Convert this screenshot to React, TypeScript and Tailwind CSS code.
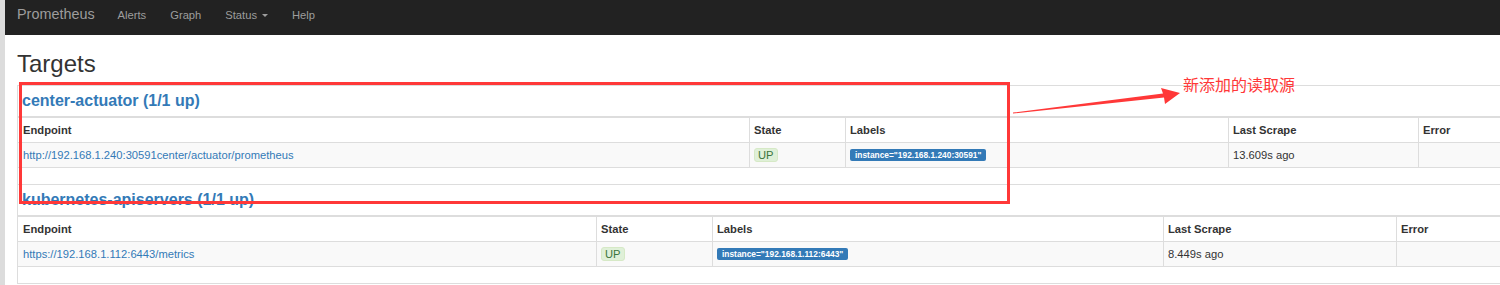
import React from "react";

type Job = {
  name: string;
  endpoint: string;
  instance: string;
  scrape: string;
  cols: string[];
};

// Column widths are measured from the screenshot (each job table sizes its own columns)
const jobs: Job[] = [
  {
    name: "center-actuator",
    endpoint: "http://192.168.1.240:30591center/actuator/prometheus",
    instance: "192.168.1.240:30591",
    scrape: "13.609s ago",
    cols: ["w-[731px]", "w-[96px]", "w-[383px]", "w-[190px]"],
  },
  {
    name: "kubernetes-apiservers",
    endpoint: "https://192.168.1.112:6443/metrics",
    instance: "192.168.1.112:6443",
    scrape: "8.449s ago",
    cols: ["w-[578px]", "w-[116px]", "w-[451px]", "w-[233px]"],
  },
];

function NavBar() {
  return (
    <div className="flex h-[35px] items-start bg-[#222] pl-[12px] text-[#9d9d9d]">
      <span className="pt-[6px] text-[14.4px] leading-[17px]">Prometheus</span>
      <nav className="ml-[23px] flex gap-[24px] pt-[8px] text-[11.2px] leading-[14px]">
        <span>Alerts</span>
        <span>Graph</span>
        <span className="flex items-center">
          Status
          <span className="ml-[5px] inline-block h-0 w-0 border-x-[3px] border-t-[3px] border-x-transparent border-t-[#9d9d9d]" />
        </span>
        <span>Help</span>
      </nav>
    </div>
  );
}

function JobTable({ job }: { job: Job }) {
  const [c1, c2, c3, c4] = job.cols;
  const cell = "flex h-full items-center pl-[4px]";
  return (
    <div className="border-t border-[#ddd]">
      {/* Job heading */}
      <div className="flex h-[32px] items-center border-b-2 border-[#ddd] pl-[4px]">
        <span className="text-[16px] font-bold leading-[18px] text-[#337ab7]">
          {job.name} (1/1 up)
        </span>
      </div>

      {/* Column header */}
      <div className="flex h-[25px] border-b border-[#ddd] text-[11.2px] font-bold leading-[16px] text-[#333]">
        <div className={`${cell} ${c1} pl-[5px]`}>Endpoint</div>
        <div className={`${cell} ${c2} border-l border-[#ddd]`}>State</div>
        <div className={`${cell} ${c3} border-l border-[#ddd]`}>Labels</div>
        <div className={`${cell} ${c4} border-l border-[#ddd]`}>Last Scrape</div>
        <div className={`${cell} flex-1 border-l border-[#ddd]`}>Error</div>
      </div>

      {/* Target row */}
      <div className="flex h-[25px] border-b border-[#ddd] bg-[#f9f9f9] text-[11.2px] leading-[16px] text-[#333]">
        <div className={`${cell} ${c1} pl-[5px] text-[#337ab7]`}>{job.endpoint}</div>
        <div className={`${cell} ${c2} border-l border-[#ddd]`}>
          <span className="rounded-[3px] border border-[#d6e9c6] bg-[#dff0d8] px-[3px] leading-[12px] text-[#3c763d]">
            UP
          </span>
        </div>
        <div className={`${cell} ${c3} border-l border-[#ddd]`}>
          <span className="rounded-[2px] bg-[#337ab7] px-[5px] pb-[2.5px] pt-[2px] text-[8.4px] font-bold leading-[8.4px] text-white">
            instance="{job.instance}"
          </span>
        </div>
        <div className={`${cell} ${c4} border-l border-[#ddd]`}>{job.scrape}</div>
        <div className={`${cell} flex-1 border-l border-[#ddd]`} />
      </div>

      {/* Spacer row */}
      <div className="h-[16px]" />
    </div>
  );
}

export default function App() {
  return (
    <div className="relative flex h-[285px] w-[1500px] overflow-hidden bg-white font-['Liberation_Sans',Arial,sans-serif]">
      <div className="w-[5px] shrink-0 bg-[#dcdcdc]" />
      <div className="flex-1">
        <NavBar />
        <div className="pl-[12px]">
          <h2 className="mb-[8px] mt-[16px] h-[26px] text-[24px] font-normal leading-[26px] text-[#333]">
            Targets
          </h2>
          <div className="border-b border-l border-[#ddd]">
            {jobs.map((job) => (
              <JobTable key={job.name} job={job} />
            ))}
          </div>
        </div>
      </div>

      {/* Screenshot annotation: red box, arrow and note */}
      <div className="pointer-events-none absolute left-[19px] top-[82px] h-[122px] w-[991px] border-[3px] border-[#ff3838]" />
      <svg
        className="pointer-events-none absolute left-0 top-0"
        width="1500"
        height="285"
        viewBox="0 0 1500 285"
      >
        <polygon
          fill="#ff3838"
          points="1013,112.6 1163,93.6 1161,88 1180,93 1165,104 1164,97.4 1013,113.6"
        />
      </svg>
      <div className="pointer-events-none absolute left-[1183px] top-[76px] text-[16px] leading-[16px] text-[#ff3838] font-['Noto_Sans_CJK_SC',sans-serif]">
        新添加的读取源
      </div>
    </div>
  );
}
